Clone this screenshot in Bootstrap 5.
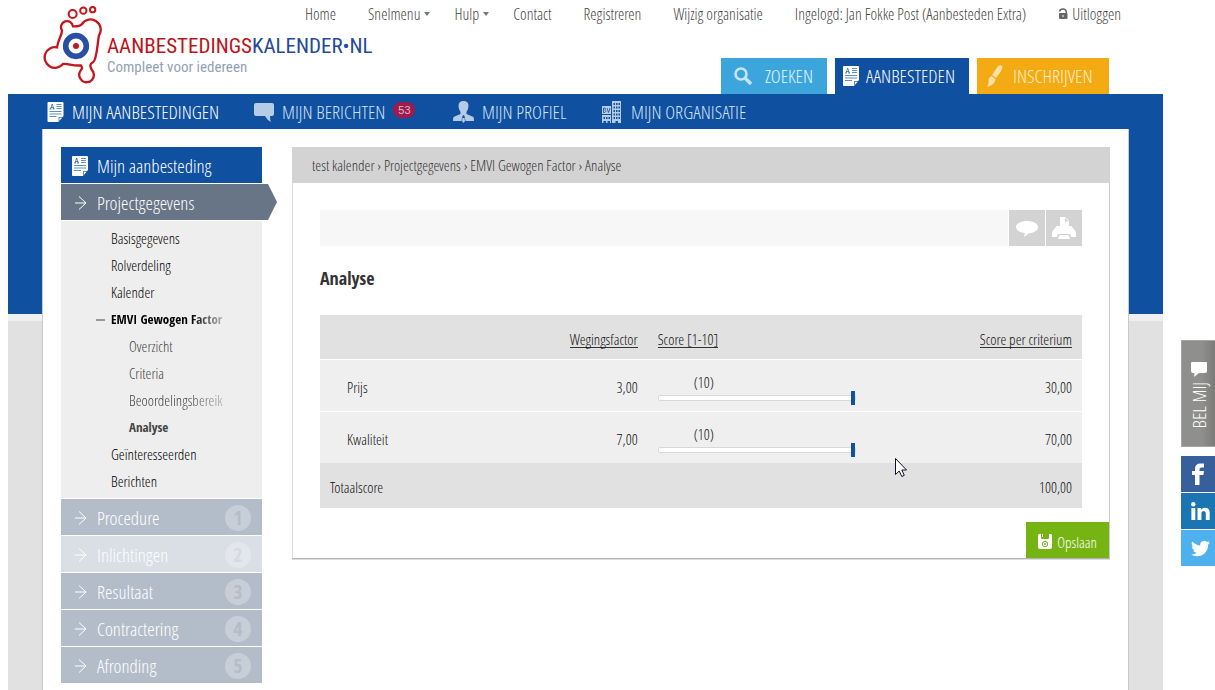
<!DOCTYPE html>
<html lang="nl">
<head>
<meta charset="utf-8">
<meta name="viewport" content="width=device-width, initial-scale=1">
<title>Aanbestedingskalender.nl - Analyse</title>
<link rel="stylesheet" href="https://cdn.jsdelivr.net/npm/bootstrap@5.3.0/dist/css/bootstrap.min.css">
<style>
:root{--blue:#0f50a0;--soft:#b5cbe6;--bold:"Open Sans Condensed","Roboto Condensed","Liberation Sans",sans-serif}
body{font-family:"Open Sans Condensed Light","Roboto Condensed","Liberation Sans",sans-serif;font-size:15px;line-height:20px;color:#111;background:#fff}
a{color:inherit;text-decoration:none}
button{font:inherit;border:0;padding:0}
svg{display:block;flex:none}
/* page frame */
.site{padding:0 52px 0 8px}
.masthead{display:grid;grid-template:58px 36px/1fr;padding:0 35px}
.masthead>*{grid-column:1}
.logo{grid-row:1/3;justify-self:start}
.brand{font-family:"Roboto Condensed","Liberation Sans",sans-serif;padding:33px 0 0 4px}
.brand-name{font-size:21px;line-height:26px;color:#bb141a}
.brand-name b{font-weight:inherit;color:#234a9c}
.brand-tag{font-size:15px;line-height:16px;color:#93a1b6}
.toplinks{grid-row:1;justify-self:end;font-size:16px;color:#444;gap:32px;padding:4px 7px 0 0}
.drop{margin-right:-8px}
.caret{width:0;border:3px solid transparent;border-top:4px solid #777;border-bottom:0}
.tabs{grid-row:2;justify-self:end;gap:8px;padding-right:19px}
.tab{height:36px;font-size:19px;background:var(--blue);color:#fff;width:134px;padding:0 8px;gap:7px}
.tab.find{background:#3ca6dc;color:#e4f4fc;width:106px;padding:0 13px}
.tab.join{background:#f4aa12;color:#fff0cc;width:132px;padding:0 10px;gap:10px}
.find svg{margin-right:6px}
.stage{background:linear-gradient(var(--blue) 0 220px,#efefef 220px 227px,#e1e1e1 227px);padding:0 34px}
.mainnav{display:grid;grid-template-columns:207px 199px 149px auto;height:35px;font-size:19px;color:#d3e1f2;padding-left:5px}
.mainnav svg{color:var(--soft)}
.mainnav .on svg{color:#fff}
.pill{background:#9e1b4b;color:#dbb9d0;font:11px/16px "Liberation Sans",sans-serif;border-radius:8px;width:22px;margin-bottom:4px}
.sheet{background:#fff;border:solid #c9c9c9;border-width:0 1px;padding:18px 18px 7px}
/* side navigation */
.side{width:201px;gap:1px;margin-right:30px}
.step{height:36px;font-size:19px;color:#fff;background:#b3bdca;padding:2px 11px 0 14px}
.step>svg{margin-right:10px}
.step.head{background:var(--blue);padding-left:11px}
.step.head>svg{margin-right:9px}
.step.now{background:#687587;width:216px;clip-path:polygon(0 0,207px 0,100% 50%,207px 100%,0 100%)}
.step.off{background:#dadee5}
.num{width:26px;height:26px;border-radius:50%;background:#c8ced7;color:#b3bdca;font-family:var(--bold);font-weight:700;font-size:20px;line-height:26px}
.off .num{background:#e3e6eb;color:#d6dae1}
.sub{background:#eee;padding:4px 30px 3px 50px;color:#000;line-height:27px;white-space:nowrap}
.sub b{font-family:var(--bold);font-size:13px;font-weight:700}
.sub .deep{padding-left:18px;color:#444}
.sub .open::before{content:"";position:absolute;left:-15px;top:13px;width:9px;height:2px;background:#999}
.clip1,.clip2{-webkit-mask-image:linear-gradient(90deg,#000 80px,#0003 113px);mask-image:linear-gradient(90deg,#000 80px,#0003 113px)}
.clip2{-webkit-mask-image:linear-gradient(90deg,#000 55px,#0006 95px);mask-image:linear-gradient(90deg,#000 55px,#0006 95px)}
/* content */
.crumbs{height:36px;background:#d3d3d3;color:#333;padding:0 20px}
.panel{border:1px solid #ddd;border-top:0;border-right-color:#ccc;border-bottom-color:#b3b3b3;box-shadow:0 1px 0 #ddd}
.inner{padding:27px 27px 14px}
.tools{background:#f7f7f7;height:36px;gap:1px}
.tool{width:36px;height:36px;background:#d3d3d3;outline:1px solid #fff}
.inner h1{font-family:var(--bold);font-size:18px;line-height:24px;margin:20px 0 25px;font-weight:700;color:#333}
.scores{width:100%;border-collapse:collapse}
.scores td,.scores th{padding:0 10px;font-weight:400}
.scores tr{background:#efefef;height:52px}
.scores thead tr,.scores tfoot tr{background:#e1e1e1;height:45px}
.scores thead tr{height:44px}
.scores thead th{padding-top:5px}
.scores thead tr,.scores tbody tr:first-child{border-bottom:1px solid #fff}
.scores tbody td{padding-top:4px}
.scores tfoot td{padding-top:2px}
.scores thead a{display:inline-block;line-height:16px;border-bottom:1px solid #333}
.scores .name{padding-left:27px}
.scores .wf{width:18%}
.scores .lead-col{width:25%}
.scores .sc{line-height:18px;padding-top:8px}
.sc label{padding-left:36px}
.slide{-webkit-appearance:none;appearance:none;display:block;width:198px;height:14px;background:none;margin:0}
.slide::-webkit-slider-runnable-track{height:6px;border:1px solid #d8d8d8;border-radius:2px;background:#fff}
.slide::-webkit-slider-thumb{-webkit-appearance:none;width:4px;height:14px;margin-top:-5px;background:var(--blue)}
.save{background:#76b413;color:#fff;height:36px;width:83px;gap:5px;padding-top:3px}
/* contact dock at the window edge */
.dock{position:fixed;right:0;top:340px;width:34px;gap:1px}
.call{height:107px;background:linear-gradient(90deg,#8f8f8d 60%,#7b7b79);color:#fff;font-size:19px;margin-bottom:8px;padding-top:3px;gap:5px;border:1px solid #a5a5a3;border-right:0}
.call span{writing-mode:vertical-rl;transform:rotate(180deg)}
.soc{height:36px}
.soc.fb{background:#375f9b}
.soc.li{background:#1a76b2}
.soc.tw{background:#4fb0ee}
.pointer{position:absolute;left:601px;top:274px;pointer-events:none}
</style>
</head>
<body>
<svg class="d-none">
 <symbol id="doc" viewBox="0 0 16 20"><path fill="currentColor" d="M1 0h14q1 0 1 1v13l-5 6H1q-1 0-1-1V1q0-1 1-1z"/><path d="M11 20v-5h5z" fill="#0f50a0" opacity=".65"/><path d="M12 18.500v-2.500h2.500z" fill="#fff"/><path d="M2 7h2M5 7h2M3 7l1.700-5 1.700 5M3.500 5.500h2.500M9 2.500h5M9 4.500h5M9 6.500h5M2 9.500h12M2 12h12M2 14.500h7" stroke="#0f50a0" stroke-opacity=".65" fill="none"/></symbol>
 <symbol id="arr" viewBox="0 0 12 16"><path d="M0 8h11M4 1.500l7 6.500-7 6.500" fill="none" stroke="currentColor"/></symbol>
</svg>
<div class="site d-flex flex-column min-vh-100">
 <header class="masthead">
  <a href="#" class="logo d-flex" aria-label="Aanbestedingskalender.nl">
   <svg class="mt-1" width="60" height="80" viewBox="39 12 180 240" fill="none" stroke="#c4161c" stroke-width="7">
    <circle cx="128" cy="42" r="12" stroke-width="6"/><circle cx="160" cy="32" r="9.500" stroke-width="6"/><circle cx="188" cy="29" r="8" stroke-width="6"/>
    <path d="M129 79A18 18 0 1 0 96 91C97 104 84 118 81 142A31 31 0 1 0 99 192C112 189 130 199 152 196C158 203 157 206 151 213A22 22 0 1 0 185 209C180 198 178 193 189 187C201 180 202 130 207 106A28 28 0 1 0 156 72C150 80 140 79 129 79z"/>
    <circle cx="138" cy="138" r="31" stroke="#2a4fa2" stroke-width="17"/><circle cx="138" cy="138" r="9" fill="#c4161c" stroke="none"/>
   </svg>
   <span class="brand text-nowrap"><span class="brand-name d-block">AANBESTEDINGS<b>KALENDER•NL</b></span><span class="brand-tag d-block">Compleet voor iedereen</span></span>
  </a>
  <nav class="toplinks d-flex align-items-start text-nowrap">
    <a href="#">Home</a>
    <a href="#" class="drop d-flex align-items-center gap-1">Snelmenu<i class="caret"></i></a>
    <a href="#" class="drop d-flex align-items-center gap-1">Hulp<i class="caret"></i></a>
    <a href="#">Contact</a><a href="#">Registreren</a><a href="#">Wijzig organisatie</a>
    <span>Ingelogd: Jan Fokke Post (Aanbesteden Extra)</span>
    <a href="#" class="d-flex align-items-center gap-1"><svg width="10" height="12" viewBox="0 0 10 12"><path d="M1.700 3.500Q2 1 5 1t3.300 3v2" fill="none" stroke="#666" stroke-width="1.500"/><rect x="1" y="5" width="8.500" height="6" rx="1" fill="#666"/><path d="M5 7v2" stroke="#fff"/></svg>Uitloggen</a>
  </nav>
  <nav class="tabs d-flex text-nowrap">
    <a href="#" class="tab find d-flex align-items-center"><svg width="18" height="20" viewBox="0 0 18 20" fill="none" stroke="#c5e4f5"><circle cx="7" cy="8" r="5.500" stroke-width="2.600"/><path d="M11 12l6 6" stroke-width="3.400"/></svg>ZOEKEN</a>
    <a href="#" class="tab d-flex align-items-center"><svg width="16" height="20"><use href="#doc"/></svg>AANBESTEDEN</a>
    <a href="#" class="tab join d-flex align-items-center"><svg width="16" height="22" viewBox="0 0 16 22" fill="#fce0a5"><path d="M11 1q3-1.500 4.500 0 0 3-2 6L9 13l-4-3z"/><path d="M4.500 11l4 3Q8 20 0 22q2-3 1.500-6T4.500 11z"/></svg>INSCHRIJVEN</a>
  </nav>
 </header>
 <div class="stage flex-grow-1 d-flex flex-column">
  <nav class="mainnav align-items-center text-nowrap">
   <a href="#" class="on text-white d-flex align-items-center gap-2"><svg width="17" height="20"><use href="#doc"/></svg>MIJN AANBESTEDINGEN</a>
   <a href="#" class="d-flex align-items-center gap-2"><svg width="20" height="20" viewBox="0 0 20 20" fill="currentColor"><path d="M2 1h16q2 0 2 2v9q0 2-2 2h-2q0 4 1 6-4-2-6-6H2q-2 0-2-2V3q0-2 2-2z"/></svg>MIJN BERICHTEN<span class="pill text-center">53</span></a>
   <a href="#" class="d-flex align-items-center gap-2"><svg width="21" height="22" viewBox="0 0 21 22" fill="currentColor"><path d="M10.500 0q5 0 5 5 0 3-2 6v2l7 3q.5 2 .5 4h-8.500l-1-5-1-1-1 1-1 5H0q0-2 .5-4l7-3v-2q-2-3-2-6 0-5 5-5z"/><path d="M9.500 17h2l.500 3-1.500 2L9 20z"/></svg>MIJN PROFIEL</a>
   <a href="#" class="d-flex align-items-center gap-2"><svg width="21" height="22" viewBox="0 0 21 22" fill="currentColor"><path d="M0 5h9v17H0zM10 0h9v22h-9z"/><path d="M1.500 16v2h1.500v-2zM4 16v2h1.500v-2zM6.500 16v2H8v-2zM1.500 20v2H4v-2zM5.500 20v2H8v-2zM11.500 2v2H13V2zM14 2v2h1.500V2zM16.500 2v2H18V2zM11.500 5.500v2H13v-2zM14 5.500v2h1.500v-2zM16.500 5.500v2H18v-2zM11.500 9v2H13V9zM14 9v2h1.500V9zM16.500 9v2H18V9zM11.500 12.500v2H13v-2zM14 12.500v2h1.500v-2zM16.500 12.500v2H18v-2zM11.500 16v2H13v-2zM14 16v2h1.500v-2zM16.500 16v2H18v-2zM13.500 20v2H16v-2zM0 13h9v1H0z" fill="#0f50a0"/><path d="M1.500 7v4.500h1.300q2-1.200 0-2.300 1.500-1.200 0-2.200zM5 7l1.500 4.500L8 7" fill="none" stroke="#0f50a0" stroke-width=".8"/></svg>MIJN ORGANISATIE</a>
  </nav>
  <div class="sheet flex-grow-1 d-flex">
   <nav class="side d-flex flex-column flex-shrink-0">
    <a href="#" class="step head d-flex align-items-center"><svg width="16" height="20"><use href="#doc"/></svg>Mijn aanbesteding</a>
    <a href="#" class="step now d-flex align-items-center"><svg width="12" height="16"><use href="#arr"/></svg>Projectgegevens</a>
    <div class="sub">
     <a class="d-block" href="#">Basisgegevens</a>
     <a class="d-block" href="#">Rolverdeling</a>
     <a class="d-block" href="#">Kalender</a>
     <a class="d-block position-relative open" href="#"><b class="d-block clip1">EMVI Gewogen Factor</b></a>
     <div class="deep">
      <a class="d-block" href="#">Overzicht</a>
      <a class="d-block" href="#">Criteria</a>
      <a class="d-block clip2" href="#">Beoordelingsbereik</a>
      <a class="d-block" href="#"><b class="d-block">Analyse</b></a>
     </div>
     <a class="d-block" href="#">Geïnteresseerden</a>
     <a class="d-block" href="#">Berichten</a>
    </div>
    <a href="#" class="step d-flex align-items-center"><svg width="12" height="16"><use href="#arr"/></svg>Procedure<span class="num ms-auto text-center">1</span></a>
    <a href="#" class="step off d-flex align-items-center"><svg width="12" height="16"><use href="#arr"/></svg>Inlichtingen<span class="num ms-auto text-center">2</span></a>
    <a href="#" class="step d-flex align-items-center"><svg width="12" height="16"><use href="#arr"/></svg>Resultaat<span class="num ms-auto text-center">3</span></a>
    <a href="#" class="step d-flex align-items-center"><svg width="12" height="16"><use href="#arr"/></svg>Contractering<span class="num ms-auto text-center">4</span></a>
    <a href="#" class="step d-flex align-items-center"><svg width="12" height="16"><use href="#arr"/></svg>Afronding<span class="num ms-auto text-center">5</span></a>
   </nav>
   <main class="flex-grow-1">
    <div class="crumbs d-flex align-items-center"><span><a href="#">test kalender</a> › <a href="#">Projectgegevens</a> › <a href="#">EMVI Gewogen Factor</a> › <a href="#">Analyse</a></span></div>
    <div class="panel position-relative">
     <div class="inner">
      <div class="tools d-flex justify-content-end">
       <button type="button" class="tool d-flex align-items-center justify-content-center" aria-label="Opmerking"><svg width="24" height="20" viewBox="0 0 24 20" fill="#fff"><path d="M12 3c6 0 11 2.500 11 6s-4 6-9 6.200L9 19l1-4c-5-.5-9-2.500-9-6s5-6 11-6z"/></svg></button>
       <button type="button" class="tool d-flex align-items-center justify-content-center" aria-label="Afdrukken"><svg width="24" height="22" viewBox="0 0 24 22" fill="#fff"><path d="M8 0h5l4 4v5H8z"/><path d="M13 1v3.500h3.500z" fill="#d3d3d3"/><path d="M4.500 9h15l4.500 6v5h-5l-1-3H6l-1 3H0v-5z"/><path d="M7.500 18h9l1.500 4H6z"/></svg></button>
      </div>
      <h1>Analyse</h1>
      <table class="scores">
       <thead><tr><th class="lead-col"></th><th class="wf text-end"><a href="#">Wegingsfactor</a></th><th><a href="#">Score [1-10]</a></th><th class="text-end"><a href="#">Score per criterium</a></th></tr></thead>
       <tbody>
        <tr><td class="name">Prijs</td><td class="text-end">3,00</td><td class="sc"><label for="s1">(10)</label><input class="slide" id="s1" type="range" min="1" max="10" value="10"></td><td class="text-end">30,00</td></tr>
        <tr><td class="name">Kwaliteit</td><td class="text-end">7,00</td><td class="sc"><label for="s2">(10)</label><input class="slide" id="s2" type="range" min="1" max="10" value="10"></td><td class="text-end">70,00</td></tr>
       </tbody>
       <tfoot><tr><td>Totaalscore</td><td></td><td></td><td class="text-end">100,00</td></tr></tfoot>
      </table>
     </div>
     <button type="button" class="save ms-auto d-flex align-items-center justify-content-center"><svg width="14" height="15" viewBox="0 0 14 15"><path fill="#fff" d="M1 0h2v4q0 1 1 1h6q1 0 1-1V0h2l1 1v12q0 2-2 2H2q-2 0-2-2V1z"/><path d="M4 0h1v3H4z" fill="#fff"/><circle cx="7" cy="10" r="2.700" fill="none" stroke="#76b413"/><circle cx="7" cy="10" r="1" fill="#76b413"/></svg>Opslaan</button>
     <svg class="pointer" width="14" height="21" viewBox="0 0 14 21"><path d="M1.500 1.500v16l3.700-3.500 2.600 5.500 2.500-1.200-2.500-5.300h4.700z" fill="#fff" stroke="#112"/></svg>
    </div>
   </main>
  </div>
 </div>
</div>
<aside class="dock d-flex flex-column">
 <button type="button" class="call d-flex flex-column align-items-center justify-content-center"><svg width="16" height="15" viewBox="0 0 16 15"><path fill="#fff" d="M1 0h14q1 0 1 1v8q0 2-2 2H8l-5 4 .500-4H2q-2 0-2-2V1q0-1 1-1z"/></svg><span>BEL MIJ</span></button>
 <a class="soc fb d-flex align-items-center justify-content-center" href="#" aria-label="Facebook"><svg width="12" height="22" viewBox="0 0 12 22"><path fill="#fff" d="M3 22V12H0V8h3V6q0-5.500 5.500-5.500H12v4H9.500Q7.500 4.500 7.500 6v2H12l-.6 4H7.500v10z"/></svg></a>
 <a class="soc li d-flex align-items-center justify-content-center ps-1" href="#" aria-label="LinkedIn"><svg width="19" height="18" viewBox="0 0 19 18" fill="#fff"><circle cx="2.300" cy="2.300" r="2.200"/><path d="M.400 6h3.900v12H.400zM6.500 6h3.700v1.700Q11.500 5.700 14 5.700q4.700 0 4.700 5V18h-3.900v-6.500q0-2.500-2-2.500-2.400 0-2.400 2.700V18H6.500z"/></svg></a>
 <a class="soc tw d-flex align-items-center justify-content-center ps-1" href="#" aria-label="Twitter"><svg width="19" height="19" viewBox="0 0 24 24"><path fill="#fff" d="M23.950 4.570a10 10 0 0 1-2.820.770 4.960 4.960 0 0 0 2.160-2.720c-.950.550-2 .950-3.130 1.180a4.920 4.920 0 0 0-8.380 4.480C7.690 8.090 4.070 6.130 1.640 3.160a4.920 4.920 0 0 0 1.520 6.570 4.900 4.900 0 0 1-2.230-.610v.060c0 2.390 1.700 4.380 3.950 4.830a5 5 0 0 1-2.210.080 4.940 4.940 0 0 0 4.600 3.420A9.870 9.870 0 0 1 0 19.540a13.990 13.990 0 0 0 7.550 2.210c9.050 0 14-7.500 14-13.980 0-.210 0-.420-.020-.630a9.940 9.940 0 0 0 2.460-2.550z"/></svg></a>
</aside>
<script src="https://cdn.jsdelivr.net/npm/bootstrap@5.3.0/dist/js/bootstrap.bundle.min.js"></script>
</body>
</html>
